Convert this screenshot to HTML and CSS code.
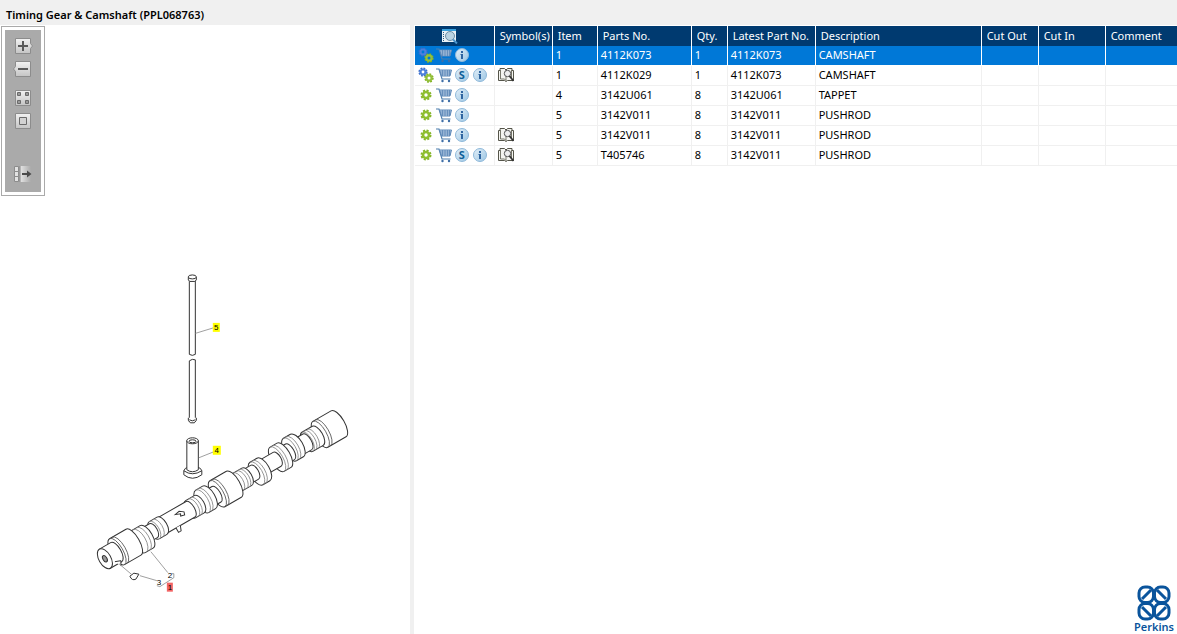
FILE: index.html
```
<!DOCTYPE html>
<html lang="en">
<head>
	<meta charset="UTF-8">
	<meta name="viewport" content="width=device-width, initial-scale=1">
	<title>Timing Gear &amp; Camshaft (PPL068763)</title>
	<link rel="stylesheet" href="styles.css">
</head>
<body>
<!-- shared icons -->
<svg class="sprite" aria-hidden="true">
	<defs>
		<linearGradient id="g_btn" x1="0" y1="0" x2="0" y2="1">
			<stop offset="0" stop-color="#f2f2f2"/>
			<stop offset="1" stop-color="#c4c4c4"/>
		</linearGradient>
		<linearGradient id="g_fade" x1="0" y1="0" x2="1" y2="0">
			<stop offset="0" stop-color="#e6e6e6"/>
			<stop offset="1" stop-color="#aaa"/>
		</linearGradient>
		<linearGradient id="g_info" x1="0" y1="0" x2="1" y2="1">
			<stop offset="0" stop-color="#e4f0f9"/>
			<stop offset="1" stop-color="#9cc6e3"/>
		</linearGradient>
	</defs>
	<symbol id="cog" viewBox="0 0 16 16">
		<circle cx="8" cy="8" r="4.4" fill="none" stroke="#86b52a" stroke-width="2.2" stroke-dasharray="2 1.456"/>
		<circle cx="8" cy="8" r="3" fill="none" stroke="#8fbf30" stroke-width="2.6"/>
	</symbol>
	<symbol id="cogs" viewBox="0 0 16 16">
		<circle cx="5" cy="5" r="3.6" fill="none" stroke="#3a6cc8" stroke-width="2" stroke-dasharray="1.7 1.13"/>
		<circle cx="5" cy="5" r="2.5" fill="none" stroke="#4c7fdb" stroke-width="2.2"/>
		<circle cx="11" cy="11" r="3.7" fill="none" stroke="#7fae1e" stroke-width="2" stroke-dasharray="1.7 1.2"/>
		<circle cx="11" cy="11" r="2.6" fill="none" stroke="#94c13a" stroke-width="2.2"/>
	</symbol>
	<symbol id="cart" viewBox="0 0 16 16">
		<path d="M0 2h3l3 10h8.500" fill="none" stroke="#4f7fae" stroke-width="1.2"/>
		<path d="M3.500 3h12L14 9H5.500z" fill="#b9cfe6" stroke="#5d88b8"/>
		<path d="M6.500 3v6M9 3v6M11.500 3v6M13.500 3v6M4 5h11M5 7h10" stroke="#5d88b8" stroke-width=".8"/>
		<circle cx="6.500" cy="14" r="1.200" fill="#3e6ea6"/>
		<circle cx="13" cy="14" r="1.200" fill="#3e6ea6"/>
	</symbol>
	<symbol id="info" viewBox="0 0 16 16">
		<circle cx="8" cy="8" r="6.500" fill="url(#g_info)" stroke="#8fb9da"/>
		<path d="M7 4h2v2H7zM6.500 7H9v5H7V8h-.5z" fill="#2f65a0"/>
	</symbol>
	<symbol id="book" viewBox="0 0 16 16">
		<path d="M.5 3.500h1.500v-2h4.500L8 3l1.500-1.500H14v2h1.500v10H9.500L8 14.500l-1.500-1h-6z" fill="#f4f4f0" stroke="#55554a"/>
		<path d="M2.500 3v9h4L8 13.500V3M13.500 3v9" fill="none" stroke="#77776a"/>
		<circle cx="9.500" cy="6.500" r="3.200" fill="#eee" stroke="#555"/>
		<path d="M11.500 9l4 5" stroke="#333" stroke-width="1.800"/>
	</symbol>
</svg>

<div class="main_wrap">
	<h1 class="title_bar">Timing Gear &amp; Camshaft (PPL068763)</h1>
	<div class="body_wrap">
		<div class="viewer">
			<div class="toolbar">
				<button type="button" class="tool_btn" aria-label="Zoom in">
					<svg viewBox="0 0 20 16">
						<path d="M2.500.5h15v5l2 2.500-2 2.500v5h-15z" fill="url(#g_btn)" stroke="#8c8c8c"/>
						<path d="M5 8h10M10 3v10" stroke="#5a5a5a" stroke-width="2"/>
					</svg>
				</button>
				<button type="button" class="tool_btn" aria-label="Zoom out">
					<svg viewBox="0 0 20 16">
						<path d="M2.500.5h15v15h-15v-5L.5 8l2-2.500z" fill="url(#g_btn)" stroke="#8c8c8c"/>
						<path d="M5 8h10" stroke="#5a5a5a" stroke-width="2"/>
					</svg>
				</button>
				<button type="button" class="tool_btn group_start" aria-label="Tile">
					<svg viewBox="0 0 20 16">
						<path d="M2.500.5h15v15h-15z" fill="url(#g_btn)" stroke="#8c8c8c"/>
						<path d="M4.500 2.500h3v3h-3zM12.500 2.500h3v3h-3zM4.500 10.500h3v3h-3zM12.500 10.500h3v3h-3z" fill="#999" stroke="#6a6a6a"/>
					</svg>
				</button>
				<button type="button" class="tool_btn" aria-label="Fit">
					<svg viewBox="0 0 20 16">
						<path d="M2.500.5h15v15h-15z" fill="url(#g_btn)" stroke="#8c8c8c"/>
						<path d="M6.500 4.500h7v7h-7z" fill="#d2d2d2" stroke="#6a6a6a"/>
					</svg>
				</button>
				<button type="button" class="tool_btn panel_btn" aria-label="Show list">
					<svg viewBox="0 0 20 16">
						<path d="M7 0h11v16H7z" fill="url(#g_fade)"/>
						<path d="M1.500.5h4v5h-4zM1.500 5.500h4v5h-4zM1.500 10.500h4v5h-4z" fill="#e2e2e2" stroke="#8c8c8c"/>
						<path d="M7 0v16" stroke="#888"/>
						<path d="M9 8h6" stroke="#4a4a4a" stroke-width="2"/>
						<path d="M14 4.500l4.500 3.500-4.500 3.500z" fill="#4a4a4a"/>
					</svg>
				</button>
			</div>
			<svg class="drawing" viewBox="0 196 410 438" preserveAspectRatio="xMinYMin meet" role="img" aria-label="Camshaft, tappet and pushrod">
				<!-- pushrod -->
				<g class="line">
					<path d="M189.500 279v75.500l3 1 3-1V279M189.500 422v-61l3-1.500 3 .5v62"/>
					<path d="M188.500 277v3l1.500 1.500h5l1.500-1.500v-3"/>
					<ellipse cx="192.500" cy="277" rx="4" ry="2"/>
					<path d="M188.500 418v2.500l2 2.500h4l2-2.500V418M189.500 420q3 2 6 0"/>
				</g>
				<!-- tappet -->
				<g class="line">
					<path d="M184 471v4q8.500 7 18 0v-4q-1-3-4-3.500h-10q-3 .5-4 3.500q8.500 6 18 0"/>
					<path d="M187 441v29q5.500 4 11.500 0V441z"/>
					<ellipse cx="192.700" cy="441" rx="5.800" ry="3"/>
					<ellipse cx="192.700" cy="441.500" rx="3.500" ry="1.500"/>
				</g>
				<!-- camshaft along its own axis, from the far end to the near end -->
				<g class="line" transform="translate(105 559) rotate(-30)">
					<path d="M249-15H270a6 15 0 0 1 0 30H249a6 15 0 0 1 0-30z"/>
					<path class="thin_less" d="M249-15a6 15 0 0 1 0 30M252-15a6 15 0 0 1 0 30"/>
					<path d="M234-11H246a5 11 0 0 1 0 22H234a5 11 0 0 1 0-22z"/>
					<path class="thin" d="M234-11a5 11 0 0 1 0 22M237-11a5 11 0 0 1 0 22M240-11a5 11 0 0 1 0 22"/>
					<path d="M222-9H234a4 9 0 0 1 0 18H222z"/>
					<path d="M215-15H223a6 13 0 0 1 0 26H215a6 13 0 0 1 0-26z"/>
					<path class="thin" d="M215-15a6 13 0 0 1 0 26M218-15a6 13 0 0 1 0 26"/>
					<path d="M204-9H214a4 9 0 0 1 0 18H204z"/>
					<path d="M199-14H207a6 14 0 0 1 0 28H199a6 14 0 0 1 0-28z"/>
					<path class="thin" d="M199-14a6 14 0 0 1 0 28M202-14a6 14 0 0 1 0 28"/>
					<path d="M180-8H199a4 8 0 0 1 0 16H180z"/>
					<path d="M174-11H182a6 13 0 0 1 0 26H174a6 13 0 0 1 0-26z"/>
					<path class="thin" d="M174-11a6 13 0 0 1 0 26M177-11a6 13 0 0 1 0 26"/>
					<path d="M160-8H173a4 8 0 0 1 0 16H160z"/>
					<path d="M154-10H164a5 10 0 0 1 0 20H154a5 10 0 0 1 0-20z"/>
					<path class="thin" d="M154-10a5 10 0 0 1 0 20M158-10a5 10 0 0 1 0 20M161-10a5 10 0 0 1 0 20"/>
					<path d="M130-15H149a6 15 0 0 1 0 30H130a6 15 0 0 1 0-30z"/>
					<path class="thin_less" d="M130-15a6 15 0 0 1 0 30M133-15a6 15 0 0 1 0 30"/>
					<path d="M118-9H129a4 9 0 0 1 0 18H118z"/>
					<path d="M113-14H121a6 13 0 0 1 0 26H113a6 13 0 0 1 0-26z"/>
					<path class="thin" d="M113-14a6 13 0 0 1 0 26M116-14a6 13 0 0 1 0 26"/>
					<path d="M99-10H109a5 10 0 0 1 0 20H99a5 10 0 0 1 0-20z"/>
					<path class="thin" d="M102-10a5 10 0 0 1 0 20M105-10a5 10 0 0 1 0 20"/>
					<path d="M62-9H99a4 9 0 0 1 0 18H62z"/>
					<path d="M83-3l5-1 4 3-1 3-4-1 1-2zM77 9l0 5 3 0 2-5"/>
					<path d="M57-10H66a5 10 0 0 1 0 20H57a5 10 0 0 1 0-20z"/>
					<path class="thin" d="M57-10a5 10 0 0 1 0 20M61-10a5 10 0 0 1 0 20"/>
					<path d="M44-8H56a4 8 0 0 1 0 16H44z"/>
					<path d="M38-11H47a6 13 0 0 1 0 26H38a6 13 0 0 1 0-26z"/>
					<path class="thin" d="M39-11a6 13 0 0 1 0 26M43-11a6 13 0 0 1 0 26"/>
					<path d="M14-15H33a6 15 0 0 1 0 30H14a6 15 0 0 1 0-30z"/>
					<path class="thin_less" d="M14-15a6 15 0 0 1 0 30M17-15a6 15 0 0 1 0 30"/>
					<path d="M0-11H13a5 11 0 0 1 0 22H0z"/>
					<ellipse cx="0" cy="0" rx="6" ry="11"/>
					<ellipse cx="0" cy="0" rx="2" ry="3.500" fill="#999"/>
				</g>
				<g class="line">
					<path d="M115 562l6-1v5M130 576.500l4-3 5 1-3 5q-4 2-6-3z"/>
				</g>
				<!-- leader lines -->
				<path class="leader" d="M195.500 333.500l18-5.500M199 458l15-6M119 564l13 11M140 576l17 5M151 552l17 21M172 574h2v4M157 586l3 1 14-9"/>
				<!-- item callouts -->
				<rect x="213" y="323" width="7" height="9" fill="#ff0"/>
				<text class="callout" x="216.500" y="330.500">5</text>
				<rect x="213" y="446" width="8" height="9" fill="#ff0"/>
				<text class="callout" x="217" y="453.500">4</text>
				<text class="callout" x="170" y="578">2</text>
				<text class="callout" x="159" y="585">3</text>
				<rect x="167" y="583" width="6" height="9" fill="#f26464"/>
				<text class="callout" x="170" y="590.500">1</text>
			</svg>
		</div>
		<div class="parts">
			<table class="parts_table">
				<colgroup>
					<col class="col_tools">
					<col class="col_symbol">
					<col class="col_item">
					<col class="col_part">
					<col class="col_qty">
					<col class="col_latest">
					<col class="col_desc">
					<col class="col_cutout">
					<col class="col_cutin">
					<col class="col_comment">
				</colgroup>
				<thead>
					<tr>
						<th class="tools_head" aria-label="Tools">
							<svg class="icon" viewBox="0 0 16 16">
								<path d="M0 1h14v13H0z" fill="#e8f1f7"/>
								<path d="M0 1h14v2H0z" fill="#39a0dc"/>
								<path d="M1.500 4v9" stroke="#2c5d86" stroke-dasharray="1 1"/>
								<circle cx="8" cy="8" r="4.500" fill="#b9d3e3" stroke="#6d8ea6"/>
								<path d="M11 11.500l4 4" stroke="#4a94cc" stroke-width="2"/>
							</svg>
						</th>
						<th>Symbol(s)</th>
						<th>Item</th>
						<th>Parts No.</th>
						<th>Qty.</th>
						<th>Latest Part No.</th>
						<th>Description</th>
						<th>Cut Out</th>
						<th>Cut In</th>
						<th>Comment</th>
					</tr>
				</thead>
				<tbody>
					<tr class="selected">
						<td><div class="icons"><svg class="icon"><use href="#cogs"/></svg><svg class="icon"><use href="#cart"/></svg><svg class="icon"><use href="#info"/></svg></div></td>
						<td></td><td>1</td><td>4112K073</td><td>1</td><td>4112K073</td><td>CAMSHAFT</td><td></td><td></td><td></td>
					</tr>
					<tr>
						<td><div class="icons"><svg class="icon"><use href="#cogs"/></svg><svg class="icon"><use href="#cart"/></svg><span class="disc">S</span><svg class="icon"><use href="#info"/></svg></div></td>
						<td><div class="icons"><svg class="icon"><use href="#book"/></svg></div></td>
						<td>1</td><td>4112K029</td><td>1</td><td>4112K073</td><td>CAMSHAFT</td><td></td><td></td><td></td>
					</tr>
					<tr>
						<td><div class="icons"><svg class="icon"><use href="#cog"/></svg><svg class="icon"><use href="#cart"/></svg><svg class="icon"><use href="#info"/></svg></div></td>
						<td></td><td>4</td><td>3142U061</td><td>8</td><td>3142U061</td><td>TAPPET</td><td></td><td></td><td></td>
					</tr>
					<tr>
						<td><div class="icons"><svg class="icon"><use href="#cog"/></svg><svg class="icon"><use href="#cart"/></svg><svg class="icon"><use href="#info"/></svg></div></td>
						<td></td><td>5</td><td>3142V011</td><td>8</td><td>3142V011</td><td>PUSHROD</td><td></td><td></td><td></td>
					</tr>
					<tr>
						<td><div class="icons"><svg class="icon"><use href="#cog"/></svg><svg class="icon"><use href="#cart"/></svg><svg class="icon"><use href="#info"/></svg></div></td>
						<td><div class="icons"><svg class="icon"><use href="#book"/></svg></div></td>
						<td>5</td><td>3142V011</td><td>8</td><td>3142V011</td><td>PUSHROD</td><td></td><td></td><td></td>
					</tr>
					<tr>
						<td><div class="icons"><svg class="icon"><use href="#cog"/></svg><svg class="icon"><use href="#cart"/></svg><span class="disc">S</span><svg class="icon"><use href="#info"/></svg></div></td>
						<td><div class="icons"><svg class="icon"><use href="#book"/></svg></div></td>
						<td>5</td><td>T405746</td><td>8</td><td>3142V011</td><td>PUSHROD</td><td></td><td></td><td></td>
					</tr>
				</tbody>
			</table>
			<div class="brand">
				<svg class="brand_mark" viewBox="0 0 34 36" aria-hidden="true">
					<g fill="none" stroke="#0a549c" stroke-width="3">
						<rect x="2" y="2" width="14.500" height="15.500" rx="6"/>
						<rect x="17.500" y="2" width="14.500" height="15.500" rx="6"/>
						<rect x="2" y="18.500" width="14.500" height="15.500" rx="6"/>
						<rect x="17.500" y="18.500" width="14.500" height="15.500" rx="6"/>
						<path d="M5 14l9-9M29 14l-9-9M5 22l9 9M29 22l-9 9"/>
					</g>
				</svg>
				<span class="brand_name">Perkins</span>
			</div>
		</div>
	</div>
</div>
</body>
</html>
```
FILE: styles.css
```
body,h1,table,th,td,button{margin:0;padding:0}
button{border:0 none;background-color:transparent;cursor:pointer}
svg{display:block}
body{background:#fff}
body,th,td,button{font-size:11px;line-height:16px;font-family:'Noto Sans','Open Sans',sans-serif;color:#000}
.sprite{position:absolute;width:0;height:0}

.main_wrap{display:flex;flex-direction:column;height:100vh}
.title_bar{padding:7px 6px 2px;font-size:11px;font-weight:600;background-color:#f0f0f0}
.body_wrap{display:flex;flex:1;min-height:0}

/* drawing pane */
.viewer{display:flex;flex:410 1 0;flex-direction:column;min-width:0;overflow:hidden;border-right:4px solid #f0f0f0}
.toolbar{display:flex;flex-direction:column;align-items:center;gap:7px;align-self:flex-start;margin:1px 0 0 1px;padding:11px 11px 13px;border:1px solid #aaa;outline:3px solid #fff;outline-offset:-4px;background-color:#aaa}
.tool_btn svg{width:20px;height:16px}
.group_start{margin-top:6px}
.panel_btn{margin-top:30px}
.drawing{width:100%}
.line{fill:#fff;stroke:#333;stroke-width:1}
.thin,.thin_less,.leader{fill:none;stroke:#888;stroke-width:.8}
.thin_less{stroke:#555}
.callout{font:8px 'Liberation Sans',sans-serif;text-anchor:middle;fill:#000}

/* parts list */
.parts{display:flex;flex:763 1 0;flex-direction:column;min-width:0;padding:1px 0 0 1px}
.parts_table{width:100%;table-layout:fixed;border-collapse:separate;border-spacing:0}
.parts_table th{height:20px;padding:0 5px;border-right:1px solid #fff;text-align:left;font-weight:normal;white-space:nowrap;color:#fff;background-color:#003a70}
.parts_table td{height:17px;padding:0 3px 2px;border-right:1px solid #f0f0f0;border-bottom:1px solid #f0f0f0;white-space:nowrap}
.parts_table th:last-child,.parts_table td:last-child{border-right:0 none}
.parts_table .selected td{border-color:#fff;color:#fff;background-color:#0078d7}
.parts_table .tools_head{padding:0 27px}
.col_tools{width:80px}
.col_symbol{width:58px}
.col_item{width:45px}
.col_part{width:94px}
.col_qty{width:36px}
.col_latest{width:88px}
.col_desc{width:166px}
.col_cutout{width:57px}
.col_cutin{width:67px}
.icons{display:flex;gap:2px}
.icon{width:16px;height:16px}
.disc{box-sizing:border-box;width:14px;height:14px;margin:1px;border:1px solid #8fb9da;border-radius:50%;line-height:12px;font-weight:bold;text-align:center;color:#0f6099;background:linear-gradient(135deg,#e4f0f9,#9cc6e3)}

.brand{display:flex;flex-direction:column;align-items:center;align-self:flex-end;margin-top:auto;padding:0 3px 1px 0}
.brand_mark{width:34px;height:36px}
.brand_name{font-size:11px;line-height:12px;font-weight:600;color:#0a549c}
```
